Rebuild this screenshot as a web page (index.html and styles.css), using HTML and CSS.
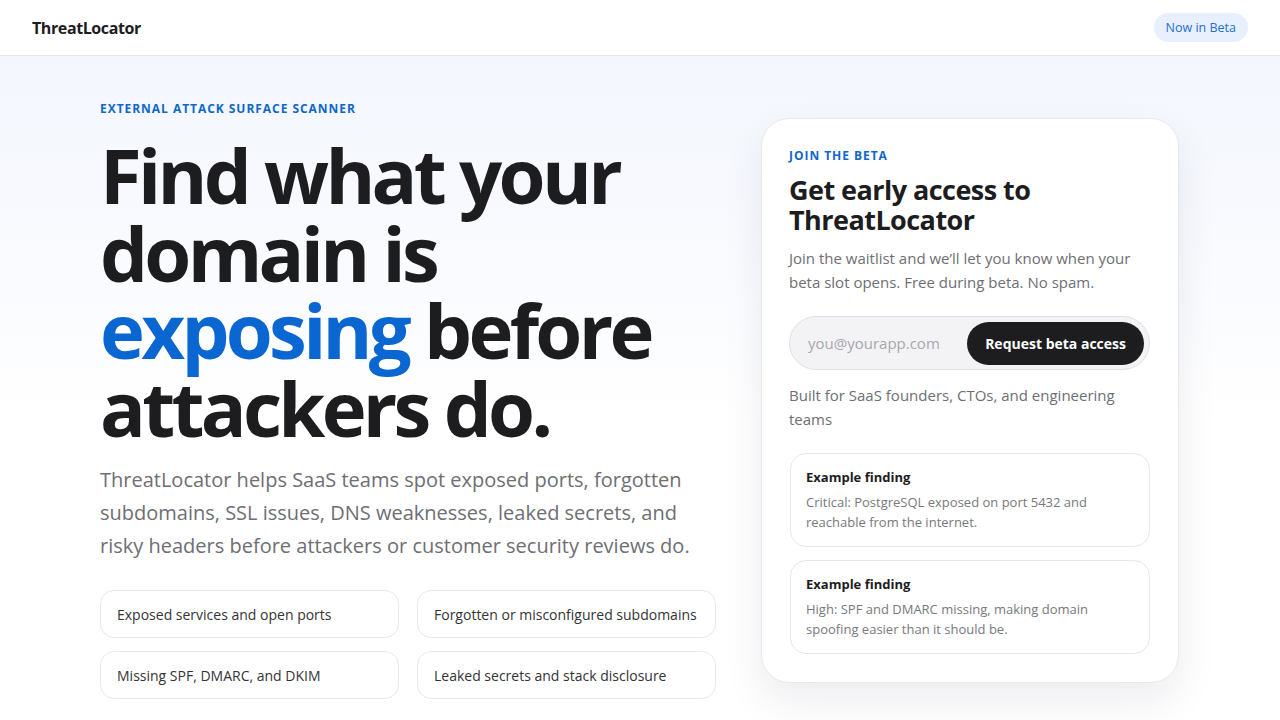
FILE: index.html
```html
<!DOCTYPE html>
<html lang="en">
<head>
<meta charset="utf-8">
<title>ThreatLocator</title>
<link rel="stylesheet" href="styles.css">
</head>
<body>
<header class="topbar">
  <div class="logo">ThreatLocator</div>
  <div class="badge">Now in Beta</div>
</header>
<main class="hero">
  <section class="intro">
    <p class="eyebrow">External attack surface scanner</p>
    <h1 class="headline">Find what your domain is <span class="accent">exposing</span> before attackers do.</h1>
    <p class="lead">ThreatLocator helps SaaS teams spot exposed ports, forgotten subdomains, SSL issues, DNS weaknesses, leaked secrets, and risky headers before attackers or customer security reviews do.</p>
    <ul class="chips">
      <li class="chip">Exposed services and open ports</li>
      <li class="chip">Forgotten or misconfigured subdomains</li>
      <li class="chip">Missing SPF, DMARC, and DKIM</li>
      <li class="chip">Leaked secrets and stack disclosure</li>
    </ul>
  </section>
  <aside class="card">
    <p class="card-eyebrow">Join the beta</p>
    <h2 class="card-title">Get early access to ThreatLocator</h2>
    <p class="card-text">Join the waitlist and we’ll let you know when your beta slot opens. Free during beta. No spam.</p>
    <form class="signup">
      <input class="email" type="email" placeholder="you@yourapp.com">
      <button class="submit" type="button">Request beta access</button>
    </form>
    <p class="card-note">Built for SaaS founders, CTOs, and engineering teams</p>
    <div class="finding">
      <div class="finding-title">Example finding</div>
      <div class="finding-text">Critical: PostgreSQL exposed on port 5432 and reachable from the internet.</div>
    </div>
    <div class="finding">
      <div class="finding-title">Example finding</div>
      <div class="finding-text">High: SPF and DMARC missing, making domain spoofing easier than it should be.</div>
    </div>
  </aside>
</main>
</body>
</html>
```
FILE: styles.css
```css
* { box-sizing: border-box; }
html, body { margin: 0; padding: 0; }
body {
  font-family: "Open Sans", "Noto Sans", sans-serif;
  color: #1d1d1f;
  background: linear-gradient(180deg, #f2f6fd 0px, #f7f9fe 200px, #ffffff 420px);
  min-height: 720px;
}
.topbar {
  height: 56px;
  background: #ffffff;
  border-bottom: 1px solid #e6e8ec;
  display: flex;
  align-items: center;
  justify-content: space-between;
  padding: 0 32px;
}
.logo {
  font-size: 16px;
  font-weight: 700;
  color: #1d1d1f;
  letter-spacing: -0.025em;
}
.badge {
  background: #e7f0fc;
  color: #1e6fd0;
  font-size: 12.5px;
  padding: 6px 12px;
  border-radius: 999px;
}
.hero {
  display: flex;
  gap: 45px;
  padding: 44px 100px 0 100px;
  align-items: flex-start;
}
.intro { width: 616px; flex: none; }
.eyebrow {
  margin: 0;
  font-size: 12px;
  font-weight: 700;
  letter-spacing: 0.08em;
  text-transform: uppercase;
  color: #0f67c8;
}
.headline {
  margin: 19px 0 0 0;
  font-size: 76px;
  line-height: 77.5px;
  font-weight: 700;
  letter-spacing: -0.049em;
  color: #1d1d1f;
}
.accent { color: #0a66d0; }
.lead {
  margin: 17px 0 0 0;
  font-size: 20px;
  line-height: 33px;
  color: #6e6e73;
}
.chips {
  list-style: none;
  margin: 28px 0 0 0;
  padding: 0;
  display: grid;
  grid-template-columns: 1fr 1fr;
  column-gap: 18px;
  row-gap: 13px;
}
.chip {
  height: 48px;
  display: flex;
  align-items: center;
  padding: 0 16px;
  background: #ffffff;
  border: 1px solid #e6e7eb;
  border-radius: 14px;
  font-size: 14px;
  color: #333336;
}
.card {
  width: 418px;
  flex: none;
  margin-top: 18px;
  background: #ffffff;
  border: 1px solid #e6e8ec;
  border-radius: 28px;
  padding: 28px 28px 28px 27px;
  box-shadow: 0 18px 40px rgba(20, 30, 60, 0.08);
}
.card-eyebrow {
  margin: 0;
  font-size: 12px;
  font-weight: 700;
  letter-spacing: 0.08em;
  text-transform: uppercase;
  color: #0f67c8;
}
.card-title {
  margin: 11px 0 0 0;
  font-size: 27px;
  line-height: 30px;
  font-weight: 700;
  letter-spacing: -0.02em;
  color: #1d1d1f;
}
.card-text {
  margin: 11px 0 0 0;
  font-size: 15px;
  line-height: 24px;
  color: #6e6e73;
}
.signup {
  margin: 22px 0 0 0;
  display: flex;
  align-items: center;
  justify-content: space-between;
  height: 54px;
  background: #f3f3f6;
  border: 1px solid #e0e0e6;
  border-radius: 999px;
  padding: 0 5px 0 18px;
}
.email {
  flex: 1;
  min-width: 0;
  border: none;
  background: transparent;
  font-family: inherit;
  font-size: 15px;
  color: #1d1d1f;
  outline: none;
  padding: 0;
}
.email::placeholder { color: #a7a7ad; }
.submit {
  height: 43px;
  padding: 0 18px;
  border: none;
  border-radius: 999px;
  background: #1d1d1f;
  color: #ffffff;
  font-family: inherit;
  font-size: 14px;
  font-weight: 700;
}
.card-note {
  margin: 13px 0 0 0;
  font-size: 15px;
  line-height: 24px;
  color: #6e6e73;
}
.finding {
  margin-top: 22px;
  margin-left: 1px;
  border: 1px solid #e6e7eb;
  border-radius: 16px;
  padding: 13px 16px 14px 15px;
}
.finding + .finding { margin-top: 13px; }
.finding-title {
  font-size: 13px;
  font-weight: 700;
  line-height: 20px;
  color: #1d1d1f;
}
.finding-text {
  margin-top: 5px;
  font-size: 13px;
  line-height: 20px;
  color: #78787d;
}
```
